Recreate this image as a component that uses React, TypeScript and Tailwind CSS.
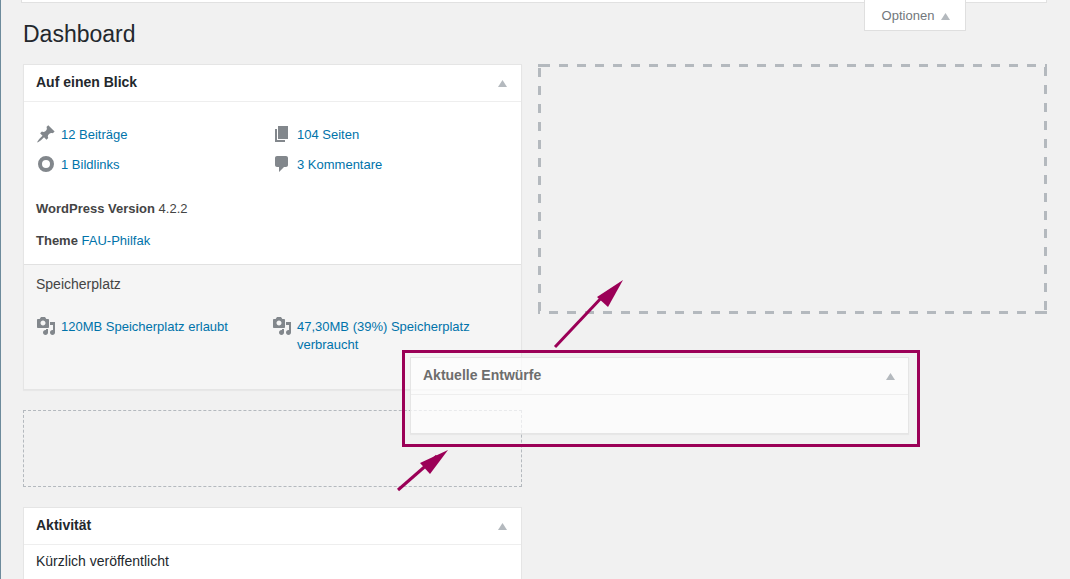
import React from 'react';

const PinIcon = () => (
  <svg viewBox="0 0 20 20" className="h-5 w-5 shrink-0 fill-[#82878c]">
    <path d="M10.44 3.02l1.82-1.82 6.36 6.35-1.83 1.82c-1.05-.68-2.48-.57-3.41.36l-.75.75c-.92.93-1.04 2.35-.35 3.41l-1.83 1.82-2.41-2.41-2.8 2.79c-.42.42-3.38 2.71-3.8 2.29s1.86-3.39 2.28-3.81l2.79-2.79L4.1 9.36l1.83-1.82c1.05.69 2.48.57 3.4-.36l.75-.75c.93-.92 1.05-2.35.36-3.41z" />
  </svg>
);

const PagesIcon = () => (
  <svg viewBox="0 0 20 20" className="h-5 w-5 shrink-0 fill-[#82878c]">
    <path d="M6 15V2h10v13H6zm-1 1h8v2H3V5h2v11z" />
  </svg>
);

const RingIcon = () => (
  <svg viewBox="0 0 20 20" className="h-5 w-5 shrink-0 fill-none stroke-[#82878c] stroke-[4]">
    <circle cx="10" cy="10" r="6" />
  </svg>
);

const CommentIcon = () => (
  <svg viewBox="0 0 20 20" className="h-5 w-5 shrink-0 fill-[#82878c]">
    <path d="M5 2h9c1.1 0 2 .9 2 2v7c0 1.1-.9 2-2 2h-2l-5 5v-5H5c-1.1 0-2-.9-2-2V4c0-1.1.9-2 2-2z" />
  </svg>
);

const MediaIcon = () => (
  <svg viewBox="0 0 20 20" className="h-5 w-5 shrink-0 fill-[#82878c]">
    <path d="M13 11V4c0-.55-.45-1-1-1h-1.67L9 1H5L3.67 3H2c-.55 0-1 .45-1 1v7c0 .55.45 1 1 1h10c.55 0 1-.45 1-1zM7 4.5c1.38 0 2.5 1.12 2.5 2.5S8.38 9.5 7 9.5 4.5 8.38 4.5 7 5.62 4.5 7 4.5zM14 6h5v10.5c0 1.38-1.12 2.5-2.5 2.5S14 17.88 14 16.5s1.12-2.5 2.5-2.5c.17 0 .34.02.5.05V9h-3V6zm-4 8.05V13h2v3.5c0 1.38-1.12 2.5-2.5 2.5S7 17.88 7 16.5 8.12 14 9.5 14c.17 0 .34.02.5.05z" />
  </svg>
);

const Triangle = () => (
  <svg viewBox="0 0 9 7" className="h-[7px] w-[9px] shrink-0 fill-[#b4b9be]">
    <path d="M4.5 0L9 7H0z" />
  </svg>
);

function StatLink({ icon, children }: { icon: React.ReactNode; children: React.ReactNode }) {
  return (
    <div className="flex gap-[5px]">
      <div className="-mt-[2px] h-[18px]">{icon}</div>
      <a className="text-[#0073aa]">{children}</a>
    </div>
  );
}

function CardHeader({ title }: { title: string }) {
  return (
    <div className="flex h-[37px] items-center justify-between border-b border-[#eeeeee] pl-3 pr-[14px]">
      <h2 className="-mt-0.5 text-[14px] font-bold text-[#23282d]">{title}</h2>
      <Triangle />
    </div>
  );
}

export default function App() {
  return (
    <div className="relative h-[579px] overflow-hidden border-l border-[#6d8b9c] bg-[#f1f1f1] text-[13px] leading-[18px] text-[#444444] [font-family:'Liberation_Sans',sans-serif]">
      <div className="ml-5 mr-[23px] h-[3px] border-b border-x border-[#e1e1e1] bg-white" />

      <div className="flex h-[61px] items-start justify-between pl-[22px] pr-[104px]">
        <h1 className="pt-[18px] text-[23px] leading-[26px] text-[#23282d]">Dashboard</h1>
        <div className="-mt-[3px] flex h-[31px] w-[102px] items-center justify-center gap-[7px] border-x border-b border-[#dfdfdf] bg-white pl-0.5 pt-0.5 text-[#72777c]">
          Optionen
          <Triangle />
        </div>
      </div>

      <div className="flex gap-4 pl-[22px] pr-[23px]">
        <div className="w-[499px] shrink-0">
          <section className="border border-[#e5e5e5] bg-white shadow-[0_1px_1px_rgba(0,0,0,0.04)]">
            <CardHeader title="Auf einen Blick" />
            <div className="px-3 pb-[14px] pt-6">
              <div className="grid grid-cols-[236px_1fr] gap-y-3">
                <StatLink icon={<PinIcon />}>12 Beiträge</StatLink>
                <StatLink icon={<PagesIcon />}>104 Seiten</StatLink>
                <StatLink icon={<RingIcon />}>1 Bildlinks</StatLink>
                <StatLink icon={<CommentIcon />}>3 Kommentare</StatLink>
              </div>
              <p className="mt-[26px]">
                <b>WordPress Version</b> 4.2.2
              </p>
              <p className="mt-[14px]">
                <b>Theme</b> <a className="text-[#0073aa]">FAU-Philfak</a>
              </p>
            </div>
            <div className="border-t border-[#e1e1e1] bg-[#f5f5f5] px-3 pb-[35px] pt-[10px]">
              <p className="text-[14px]">Speicherplatz</p>
              <div className="mt-[25px] grid grid-cols-[236px_1fr]">
                <StatLink icon={<MediaIcon />}>120MB Speicherplatz erlaubt</StatLink>
                <StatLink icon={<MediaIcon />}>47,30MB (39%) Speicherplatz verbraucht</StatLink>
              </div>
            </div>
          </section>

          <div className="mt-5 h-[77px] border border-dashed border-[#b4b9be]" />

          <section className="mt-5 border border-[#e5e5e5] bg-white">
            <CardHeader title="Aktivität" />
            <p className="h-[60px] px-3 pt-[7px] text-[14px] text-[#23282d]">Kürzlich veröffentlicht</p>
          </section>
        </div>

        {/* wide dashes, a plain dashed border comes out too tight */}
        <div className="h-[250px] flex-1 [background:linear-gradient(#b4b9be,#b4b9be)_0_0/3px_3px_no-repeat,linear-gradient(#b4b9be,#b4b9be)_100%_100%/3px_3px_no-repeat,linear-gradient(90deg,#b4b9be_50%,transparent_50%)_3px_0/18px_3px_repeat-x,linear-gradient(90deg,#b4b9be_50%,transparent_50%)_11px_100%/18px_3px_repeat-x,linear-gradient(#b4b9be_50%,transparent_50%)_0_4px/3px_18px_repeat-y,linear-gradient(#b4b9be_50%,transparent_50%)_100%_3px/3px_18px_repeat-y]" />
      </div>

      {/* dragged box, floats over the columns */}
      <div className="absolute left-[401px] top-[350px] h-[97px] w-[518px] border-[3px] border-[#9b0057] p-[4px_8px_10px_5px]">
        <div className="h-[77px] border border-[#e5e5e5] bg-white/70 shadow-[0_1px_1px_rgba(0,0,0,0.04)]">
          <div className="flex h-[37px] items-center justify-between border-b border-[#eeeeee] pl-3 pr-[13px]">
            <h2 className="-mt-0.5 text-[14px] font-bold text-[#6d6d6d]">Aktuelle Entwürfe</h2>
            <Triangle />
          </div>
        </div>
      </div>

      <svg className="absolute left-[390px] top-[270px] h-[230px] w-[240px]" viewBox="0 0 240 230">
        <path d="M164 77L213 25" className="fill-none stroke-[#9b0057] stroke-[3]" />
        <path d="M232 10L206 27L217 37z" className="fill-[#9b0057]" />
        <path d="M7 220L46 186" className="fill-none stroke-[#9b0057] stroke-[3]" />
        <path d="M57 180L29 193L39 204z" className="fill-[#9b0057]" />
      </svg>
    </div>
  );
}
